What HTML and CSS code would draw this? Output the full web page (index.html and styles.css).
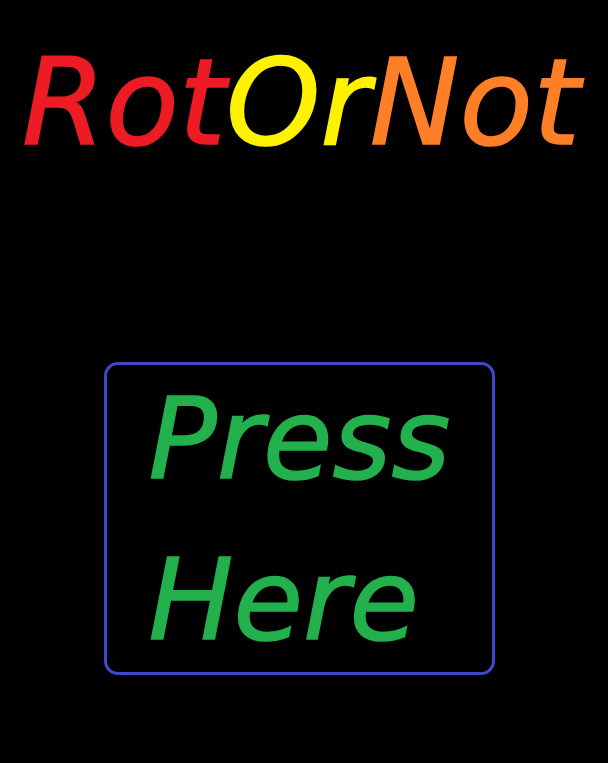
FILE: index.html
```html
<!DOCTYPE html>
<html>
<head>
<meta charset="utf-8">
<link rel="stylesheet" href="styles.css">
</head>
<body>
<main class="page">
  <h1 class="title"><span class="red">Rot</span><span class="yellow">Or</span><span class="orange">Not</span></h1>
  <button class="press">
    <span class="line">Press</span>
    <span class="line">Here</span>
  </button>
</main>
</body>
</html>
```
FILE: styles.css
```css
html, body {
  margin: 0;
  padding: 0;
  background: #000;
}
.page {
  width: 608px;
  height: 763px;
  display: flex;
  flex-direction: column;
  align-items: center;
  font-family: "DejaVu Sans", sans-serif;
  font-style: oblique;
}
.title {
  margin: 43px 0 0 0;
  font-size: 120px;
  line-height: 1;
  font-weight: normal;
  font-style: oblique;
  white-space: nowrap;
  transform: translateX(-3px);
  -webkit-text-stroke: 1.5px currentColor;
}
.red { color: #ed1c24; }
.yellow { color: #fff200; }
.orange { color: #ff7f27; }
.press {
  margin-top: 199px;
  width: 391px;
  height: 313px;
  box-sizing: border-box;
  border: 3px solid #3f48cc;
  border-radius: 14px;
  background: #000;
  padding: 18px 0 0 42px;
  display: flex;
  flex-direction: column;
  align-items: flex-start;
  gap: 48px;
  color: #22b14c;
  font-family: "DejaVu Sans", sans-serif;
  font-style: oblique;
  font-size: 113px;
  line-height: 1;
  cursor: pointer;
  transform: translateX(-5px);
  -webkit-text-stroke: 1.5px currentColor;
}
.line {
  display: block;
}
```
